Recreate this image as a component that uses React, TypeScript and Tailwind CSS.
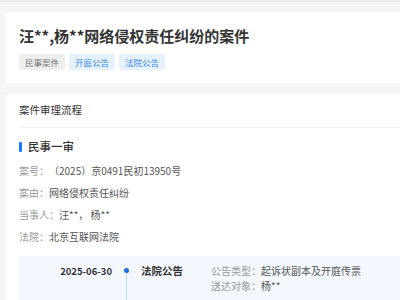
import React from 'react';

const font = { fontFamily: '"Noto Sans CJK SC", "Noto Sans", sans-serif' };

const InfoRow: React.FC<{ label: string; value: string }> = ({ label, value }) => (
  <div className="flex h-[22px] items-center text-[10px] leading-none">
    <span className="text-[#999]">{label}：</span>
    <span className="text-[#555]">{value}</span>
  </div>
);

const App: React.FC = () => {
  return (
    <div className="w-[400px] h-[300px] overflow-hidden bg-[#f5f5f5] border-t-2 border-[#e9e9e9]" style={font}>
      <div className="w-[420px] pl-[5px] pt-[10px]">
        <div className="bg-white rounded-[4px] pl-[14px] pt-[14px] h-[71px]">
          <h1 className="text-[15px] leading-[20px] font-bold text-[#333]">汪**,杨**网络侵权责任纠纷的案件</h1>
          <div className="flex gap-[4px] mt-[8px]">
            <span className="h-[16px] px-[6px] flex items-center rounded-[2px] bg-[#eeeeee] text-[#777] text-[8.5px]">民事案件</span>
            <span className="h-[16px] px-[6px] flex items-center rounded-[2px] bg-[#e5f1fd] text-[#3b8ae6] text-[8.5px]">开庭公告</span>
            <span className="h-[16px] px-[6px] flex items-center rounded-[2px] bg-[#e5f1fd] text-[#3b8ae6] text-[8.5px]">法院公告</span>
          </div>
        </div>

        <div className="bg-white rounded-[4px] mt-[11px] pl-[14px] h-[220px]">
          <div className="h-[34px] flex items-center text-[10.5px] leading-none text-[#333] border-b border-[#f0f0f0]">
            案件审理流程
          </div>
          <div className="flex items-center mt-[14px] h-[10px]">
            <span className="w-[3px] h-[10px] bg-[#1677ff] rounded-[1px]" />
            <span className="ml-[6px] text-[11.5px] font-medium text-[#333] leading-none">民事一审</span>
          </div>
          <div className="mt-[8px]">
            <InfoRow label="案号" value="（2025）京0491民初13950号" />
            <InfoRow label="案由" value="网络侵权责任纠纷" />
            <InfoRow label="当事人" value="汪**， 杨**" />
            <InfoRow label="法院" value="北京互联网法院" />
          </div>
          <div className="mt-[8px] bg-[#f3f8fe] h-[60px] flex pt-[8px]">
            <div className="w-[93px] text-right text-[9.5px] font-bold text-[#333] leading-[14px]">2025-06-30</div>
            <div className="w-[29px] flex flex-col items-center">
              <span className="mt-[4px] w-[5px] h-[5px] rounded-full bg-[#1a6fe8]" />
              <span className="w-px flex-1 bg-[#bcd8f7]" />
            </div>
            <div className="w-[70px] text-[10.5px] font-bold text-[#333] leading-[14px]">法院公告</div>
            <div className="text-[10px] leading-[15px] -mt-[1px]">
              <div><span className="text-[#999]">公告类型：</span><span className="text-[#555]">起诉状副本及开庭传票</span></div>
              <div><span className="text-[#999]">送达对象：</span><span className="text-[#555]">杨**</span></div>
            </div>
          </div>
        </div>
      </div>
    </div>
  );
};

export default App;
